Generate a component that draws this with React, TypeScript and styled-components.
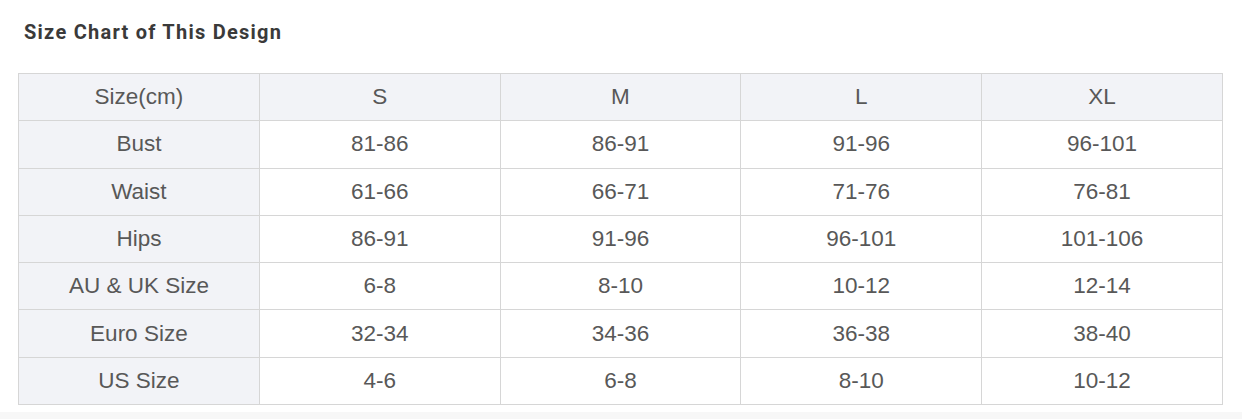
import React from "react";
import styled, { createGlobalStyle } from "styled-components";

const Global = createGlobalStyle`
  html, body { margin: 0; padding: 0; background: #ffffff; }
  body { font-family: "Liberation Sans", Arial, sans-serif; }
`;

const Page = styled.div`
  width: 1242px;
  height: 419px;
  box-sizing: border-box;
  padding: 19px 0 0 18px;
  background: linear-gradient(#ffffff 0, #ffffff 412px, #f7f7f7 412px);
`;

const Title = styled.h2`
  margin: 0 0 0 6px;
  font-family: Roboto, "Noto Sans", sans-serif;
  font-weight: 700;
  font-size: 20px;
  letter-spacing: 1.25px;
  line-height: 27px;
  color: #3a3a3a;
`;

const Table = styled.table`
  margin-top: 27px;
  width: 1205px;
  border-collapse: collapse;
  table-layout: fixed;
  border: 1px solid #d3d3d3;
`;

const Row = styled.tr`
  height: 47.3px;
`;

const Cell = styled.td<{ $shade?: boolean }>`
  border: 1px solid #d6d6d6;
  padding: 0;
  text-align: center;
  vertical-align: middle;
  font-family: "Liberation Sans", Arial, sans-serif;
  font-size: 22.5px;
  color: #585858;
  background: ${(p) => (p.$shade ? "#f2f3f7" : "#ffffff")};
`;

const header = ["Size(cm)", "S", "M", "L", "XL"];
const rows: string[][] = [
  ["Bust", "81-86", "86-91", "91-96", "96-101"],
  ["Waist", "61-66", "66-71", "71-76", "76-81"],
  ["Hips", "86-91", "91-96", "96-101", "101-106"],
  ["AU & UK Size", "6-8", "8-10", "10-12", "12-14"],
  ["Euro Size", "32-34", "34-36", "36-38", "38-40"],
  ["US Size", "4-6", "6-8", "8-10", "10-12"],
];

export default function App() {
  return (
    <Page>
      <Global />
      <Title>Size Chart of This Design</Title>
      <Table>
        <tbody>
          <Row>
            {header.map((h) => (
              <Cell key={h} $shade>
                {h}
              </Cell>
            ))}
          </Row>
          {rows.map((r) => (
            <Row key={r[0]}>
              {r.map((c, i) => (
                <Cell key={i} $shade={i === 0}>
                  {c}
                </Cell>
              ))}
            </Row>
          ))}
        </tbody>
      </Table>
    </Page>
  );
}
